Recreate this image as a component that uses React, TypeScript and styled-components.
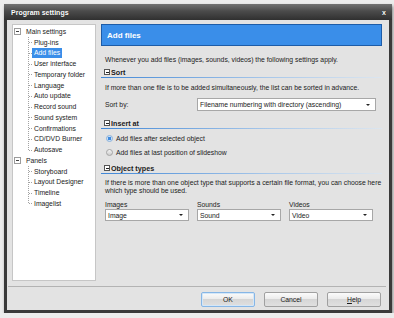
import styled, { createGlobalStyle } from 'styled-components';

const GlobalStyle = createGlobalStyle`
  html, body {
    margin: 0;
    padding: 0;
    background: #ececec;
  }
  body {
    font-family: "Liberation Sans", Arial, sans-serif;
    font-size: 6.8px;
    color: #1b1b1b;
  }
`;

const Window = styled.div`
  margin: 4px 0 0 4px;
  width: 388px;
  height: 309px;
  box-sizing: border-box;
  padding: 0 3px 3px;
  background: #3a3a3a;
  display: flex;
  flex-direction: column;
  box-shadow: 1px 2px 3px rgba(0, 0, 0, 0.45);
`;

const TitleBar = styled.div`
  flex: none;
  height: 16px;
  margin: 0 -3px;
  padding: 0 6px 0 7px;
  display: flex;
  align-items: center;
  justify-content: space-between;
  background: linear-gradient(#727272, #4b4b4b 45%, #303030);
  color: #fff;
  font-weight: bold;
  font-size: 7px;
  text-shadow: 0 0 1px rgba(0, 0, 0, 0.6);
`;

const Close = styled.span`
  font-size: 7px;
  font-weight: bold;
`;

const Body = styled.div`
  flex: 1;
  background: #e3e3e3;
  display: flex;
  flex-direction: column;
`;

const Main = styled.div`
  display: flex;
  gap: 5px;
  padding: 4px 7px 0 5px;
`;

const Tree = styled.div`
  width: 84px;
  height: 257px;
  box-sizing: border-box;
  background: #fff;
  border: 1px solid #c6c6c6;
  padding: 1.5px 0 0 1px;
`;

const TreeRow = styled.div`
  height: 10.75px;
  display: flex;
  align-items: center;
`;

const Expander = styled.span`
  width: 7px;
  height: 7px;
  box-sizing: border-box;
  border: 1px solid #9c9c9c;
  background: #fff;
  display: flex;
  align-items: center;
  justify-content: center;
  margin-right: 3px;
  flex: none;
`;

const MinusBar = styled.span<{ $dark?: boolean }>`
  width: 3px;
  height: 1px;
  background: ${(p) => (p.$dark ? '#222' : '#444')};
`;

const ChildGroup = styled.div`
  margin-left: 14px;
  background-image: repeating-linear-gradient(to bottom, #a3a3a3 0 1px, transparent 1px 2px);
  background-size: 1px calc(100% - 5px);
  background-repeat: no-repeat;
`;

const ChildRow = styled(TreeRow)`
  &::before {
    content: '';
    width: 3px;
    margin-left: 1px;
    border-top: 1px dotted #a3a3a3;
  }
`;

const NodeLabel = styled.span<{ $selected?: boolean }>`
  padding: 1px 2px;
  line-height: 8px;
  background: ${(p) => (p.$selected ? '#3a8ee9' : 'transparent')};
  color: ${(p) => (p.$selected ? '#fff' : '#1b1b1b')};
`;

const Content = styled.div`
  flex: 1;
  display: flex;
  flex-direction: column;
`;

const Banner = styled.div`
  height: 22px;
  box-sizing: border-box;
  border: 1px solid #1d5ca8;
  background: #3a8ee9;
  color: #fff;
  font-weight: bold;
  font-size: 8px;
  display: flex;
  align-items: center;
  padding-left: 5px;
`;

const Text = styled.div<{ $top: number; $lh?: number }>`
  margin-top: ${(p) => p.$top}px;
  line-height: ${(p) => p.$lh ?? 10}px;
  padding-left: 4px;
`;

const SectionHead = styled.div<{ $top: number }>`
  margin-top: ${(p) => p.$top}px;
  height: 10px;
  display: flex;
  align-items: center;
  padding-left: 3px;
  font-weight: bold;
  font-size: 7.2px;
  border-bottom: 1px solid;
  border-image: linear-gradient(to right, #3f86d6, #a9c8ea 60%, #dde6ef) 1;
`;

const SectionBox = styled(Expander)`
  width: 6px;
  height: 6px;
  border-color: #555;
  margin-right: 1px;
`;

const SortRow = styled.div`
  margin-top: 5px;
  padding-left: 4px;
  display: grid;
  grid-template-columns: 92px 179px;
  align-items: center;
`;

const Select = styled.div<{ $h?: number }>`
  height: ${(p) => p.$h ?? 13}px;
  box-sizing: border-box;
  border: 1px solid #a7a7a7;
  background: #fff;
  display: flex;
  align-items: center;
  justify-content: space-between;
  padding: 0 5px 0 2px;
`;

const Arrow = styled.span`
  width: 0;
  height: 0;
  border-left: 2px solid transparent;
  border-right: 2px solid transparent;
  border-top: 2px solid #222;
`;

const RadioRow = styled.label`
  margin-top: 4px;
  height: 10px;
  display: flex;
  align-items: center;
  gap: 3px;
  padding-left: 5px;
`;

const Radio = styled.span<{ $checked?: boolean }>`
  width: 7px;
  height: 7px;
  box-sizing: border-box;
  border-radius: 50%;
  border: 1px solid ${(p) => (p.$checked ? '#8ab3dd' : '#a5a5a5')};
  background: ${(p) =>
    p.$checked
      ? 'radial-gradient(circle, #3f8be0 0 40%, #cfe1f4 55%)'
      : 'linear-gradient(#f4f4f4, #cdcdcd)'};
`;

const TypesGrid = styled.div`
  margin-top: 5px;
  padding-left: 4px;
  display: grid;
  grid-template-columns: repeat(3, 84px);
  column-gap: 8px;
`;

const FieldLabel = styled.div`
  line-height: 9px;
`;

const Separator = styled.div`
  margin: 5px 3px 0 1px;
  border-top: 1px solid #b3b3b3;
`;

const ButtonRow = styled.div`
  display: flex;
  justify-content: flex-end;
  gap: 9px;
  padding: 5px 8px 0 0;
`;

const Button = styled.button<{ $default?: boolean }>`
  width: 54px;
  height: 15px;
  padding: 0;
  font: inherit;
  color: #1b1b1b;
  border: 1px solid ${(p) => (p.$default ? '#86b6e6' : '#a0a0a0')};
  border-radius: 2px;
  background: linear-gradient(#fbfbfb, #ececec 45%, #d6d6d6 50%, #e0e0e0);
  box-shadow: ${(p) => (p.$default ? 'inset 0 0 0 1px #d4e7f8' : 'none')};
`;

const treeMain = [
  'Plug-ins',
  'Add files',
  'User interface',
  'Temporary folder',
  'Language',
  'Auto update',
  'Record sound',
  'Sound system',
  'Confirmations',
  'CD/DVD Burner',
  'Autosave',
];
const treePanels = ['Storyboard', 'Layout Designer', 'Timeline', 'Imagelist'];

const TreeNode = ({ label, items }: { label: string; items: string[] }) => (
  <>
    <TreeRow>
      <Expander>
        <MinusBar />
      </Expander>
      <NodeLabel>{label}</NodeLabel>
    </TreeRow>
    <ChildGroup>
      {items.map((it) => (
        <ChildRow key={it}>
          <NodeLabel $selected={it === 'Add files'}>{it}</NodeLabel>
        </ChildRow>
      ))}
    </ChildGroup>
  </>
);

const Section = ({ title, top }: { title: string; top: number }) => (
  <SectionHead $top={top}>
    <SectionBox>
      <MinusBar $dark />
    </SectionBox>
    {title}
  </SectionHead>
);

const App = () => (
  <>
    <GlobalStyle />
    <Window>
      <TitleBar>
        <span>Program settings</span>
        <Close>x</Close>
      </TitleBar>
      <Body>
        <Main>
          <Tree>
            <TreeNode label="Main settings" items={treeMain} />
            <TreeNode label="Panels" items={treePanels} />
          </Tree>
          <Content>
            <Banner>Add files</Banner>
            <Text $top={9}>
              Whenever you add files (images, sounds, videos) the following settings apply.
            </Text>
            <Section title="Sort" top={2} />
            <Text $top={5}>
              If more than one file is to be added simultaneously, the list can be sorted in advance.
            </Text>
            <SortRow>
              <span>Sort by:</span>
              <Select>
                Filename numbering with directory (ascending)
                <Arrow />
              </Select>
            </SortRow>
            <Section title="Insert at" top={7} />
            <RadioRow>
              <Radio $checked />
              Add files after selected object
            </RadioRow>
            <RadioRow>
              <Radio />
              Add files at last position of slideshow
            </RadioRow>
            <Section title="Object types" top={6} />
            <Text $top={5} $lh={8}>
              If there is more than one object type that supports a certain file format, you can choose here
              <br />
              which type should be used.
            </Text>
            <TypesGrid>
              <FieldLabel>Images</FieldLabel>
              <FieldLabel>Sounds</FieldLabel>
              <FieldLabel>Videos</FieldLabel>
              <Select $h={12}>
                Image
                <Arrow />
              </Select>
              <Select $h={12}>
                Sound
                <Arrow />
              </Select>
              <Select $h={12}>
                Video
                <Arrow />
              </Select>
            </TypesGrid>
          </Content>
        </Main>
        <Separator />
        <ButtonRow>
          <Button $default>OK</Button>
          <Button>Cancel</Button>
          <Button>
            <u>H</u>elp
          </Button>
        </ButtonRow>
      </Body>
    </Window>
  </>
);

export default App;
